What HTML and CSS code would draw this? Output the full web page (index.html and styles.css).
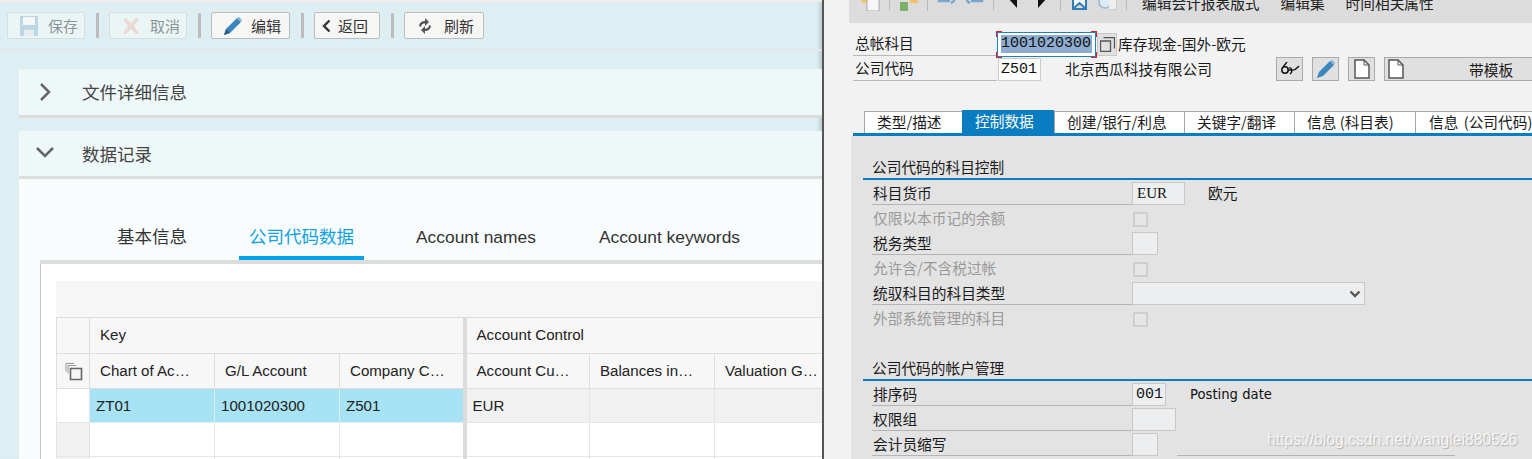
FILE: index.html
```html
<!DOCTYPE html>
<html lang="zh">
<head>
<meta charset="utf-8">
<title>SAP</title>
<link rel="stylesheet" href="styles.css">
</head>
<body>
<div class="screen">
  <main class="left">
    <div class="toolbar">
      <button class="btn off"><svg width="20" height="22" viewBox="0 0 20 22"><path d="M1 1h18v20H1z" fill="#bcd6e4"/><path d="M4 2h12v8H4z" fill="#f2f7f8"/><path d="M5 15h10v6H5z" fill="#e8eef0"/></svg><span>保存</span></button>
      <i class="sep"></i>
      <button class="btn off"><svg width="20" height="18" viewBox="0 0 20 18"><path d="M2 2l3-1 5 5 5-5 3 1-5 7 5 7-3 1-5-5-5 5-3-1 5-7z" fill="#ead9d3"/></svg><span>取消</span></button>
      <i class="sep"></i>
      <button class="btn edit"><svg width="20" height="20" viewBox="0 0 20 20"><path d="M1 19l2-6L14 2l4 4L7 17z" fill="#3b87bd"/><path d="M14 2l2-1 3 3-1 2z" fill="#7fb4d6"/><path d="M1 19l2-6 4 4z" fill="#2a5f8a"/></svg><span>编辑</span></button>
      <i class="sep"></i>
      <button class="btn back"><svg width="9" height="14" viewBox="0 0 9 14"><path d="M7.500 1.500L2 7l5.500 5.500" fill="none" stroke="#333" stroke-width="2.400"/></svg><span>返回</span></button>
      <i class="sep"></i>
      <button class="btn refresh"><svg width="16" height="18" viewBox="0 0 16 18"><path d="M2 9a6 6 0 0 1 6-5V1l4 4-4 4V6.500A3.500 3.500 0 0 0 4 10z" fill="#555"/><path d="M14 9a6 6 0 0 1-6 5v3l-4-4 4-4v2.500A3.500 3.500 0 0 0 12 8z" fill="#555"/></svg><span>刷新</span></button>
    </div>

    <section class="panel">
      <div class="panel-head">
        <svg class="chev" width="18" height="20" viewBox="0 0 18 20"><path d="M5 2l8 8-8 8" fill="none" stroke="#666" stroke-width="2.500"/></svg>
        <h2>文件详细信息</h2>
      </div>
    </section>

    <section class="panel open">
      <div class="panel-head">
        <svg class="chev" width="18" height="20" viewBox="0 0 18 20"><path d="M1 5l8 8 8-8" fill="none" stroke="#666" stroke-width="2.500"/></svg>
        <h2>数据记录</h2>
      </div>
      <div class="panel-body">
        <nav class="tabs">
          <a class="tab">基本信息</a>
          <a class="tab active">公司代码数据</a>
          <a class="tab">Account names</a>
          <a class="tab">Account keywords</a>
        </nav>
        <div class="tab-content">
          <div class="table-bar"></div>
          <table class="grid">
            <colgroup>
              <col class="c-sel"><col class="c-w"><col class="c-w"><col class="c-w3"><col class="c-w4"><col class="c-w"><col class="c-w">
            </colgroup>
            <tr class="group">
              <th></th>
              <th colspan="3" class="key-group">Key</th>
              <th colspan="3">Account Control</th>
            </tr>
            <tr class="head">
              <th class="copy"><svg width="18" height="18" viewBox="0 0 18 18"><path d="M1 .5h8M1 .5v8M3 2.500h8M3 2.500v8" fill="none" stroke="#999"/><path d="M5.500 5.500h11v11h-11z" fill="none" stroke="#666" stroke-width="1.600"/></svg></th>
              <th>Chart of Ac…</th>
              <th>G/L Account</th>
              <th class="key-end">Company C…</th>
              <th>Account Cu…</th>
              <th>Balances in…</th>
              <th>Valuation G…</th>
            </tr>
            <tr class="row first">
              <td class="sel"></td>
              <td class="hit">ZT01</td>
              <td class="hit">1001020300</td>
              <td class="hit key-end">Z501</td>
              <td class="pad4">EUR</td>
              <td></td>
              <td></td>
            </tr>
            <tr class="row">
              <td class="sel grey"></td><td></td><td></td><td class="key-end"></td><td></td><td></td><td></td>
            </tr>
            <tr class="row">
              <td class="sel grey"></td><td></td><td></td><td class="key-end"></td><td></td><td></td><td></td>
            </tr>
          </table>
        </div>
      </div>
    </section>
  </main>

  <aside class="right">
    <div class="sap-toolbar">
      <svg width="18" height="16" viewBox="0 0 18 16"><path d="M0 0h8v8H0z" fill="#f3c46e"/><path d="M5 2h12v14H5z" fill="#f7f7f7" stroke="#aaa"/></svg>
      <i class="sap-sep"></i>
      <svg width="19" height="16" viewBox="0 0 19 16"><path d="M1 7h8v9H1z" fill="#7fb069"/><path d="M11 0h8v8h-8z" fill="#f3c46e"/></svg>
      <i class="sap-sep"></i>
      <svg class="undo" width="19" height="12" viewBox="0 0 19 12"><path d="M2 0v8h11M14 0c5 2 5 8 0 10" fill="none" stroke="#7aa6cb" stroke-width="2.500"/></svg>
      <svg class="undo redo" width="18" height="12" viewBox="0 0 18 12"><path d="M16 0v8H5M4 0c-5 2-5 8 0 10" fill="none" stroke="#7aa6cb" stroke-width="2.500"/></svg>
      <i class="sap-sep"></i>
      <svg class="nav prev" width="9" height="10" viewBox="0 0 9 10"><path d="M0 0h9v10z" fill="#111"/></svg>
      <svg class="nav next" width="9" height="10" viewBox="0 0 9 10"><path d="M0 0h9L0 10z" fill="#111"/></svg>
      <i class="sap-sep"></i>
      <svg class="star" width="17" height="14" viewBox="0 0 17 14"><path d="M2 0v13h13V0M3 12l5.500-5 5.500 5" fill="#f3f6f8" stroke="#2f7fb5" stroke-width="2"/></svg>
      <svg class="find" width="20" height="14" viewBox="0 0 20 14"><circle cx="8" cy="6" r="6" fill="#dfe9f2" stroke="#93b9d6" stroke-width="1.500"/><path d="M12 1h8v13h-8" fill="#eee" stroke="#aaa"/></svg>
      <i class="sap-sep"></i>
      <span class="sap-action first">编辑会计报表版式</span>
      <span class="sap-action">编辑集</span>
      <span class="sap-action">时间相关属性</span>
    </div>

    <div class="head-form">
      <div class="h-row">
        <label class="h-label">总帐科目</label>
        <span class="focus-field"><b>1001020300</b></span>
        <span class="copy-btn"><svg width="15" height="15" viewBox="0 0 15 15"><path d="M3.500.5h11v11M.5 4h10v10.500H.5z" fill="none" stroke="#555" stroke-width="1.300"/></svg></span>
        <span class="h-desc">库存现金-国外-欧元</span>
      </div>
      <div class="h-row second">
        <label class="h-label">公司代码</label>
        <span class="code-field">Z501</span>
        <span class="h-desc company">北京西瓜科技有限公司</span>
        <span class="icon-btn"><svg width="20" height="16" viewBox="0 0 20 16"><circle cx="5" cy="9" r="3.200" fill="none" stroke="#111" stroke-width="1.500"/><path d="M9 7c3-1 4 4 1 6M3 6l4-5M8 9h4M12 9c3 1 5-2 7-4" fill="none" stroke="#111" stroke-width="1.300"/></svg></span>
        <span class="icon-btn"><svg width="20" height="20" viewBox="0 0 20 20"><path d="M1 19l2-6L14 2l4 4L7 17z" fill="#3b87bd"/><path d="M14 2l2-1 3 3-1 2z" fill="#7fb4d6"/></svg></span>
        <span class="icon-btn"><svg width="16" height="20" viewBox="0 0 16 20"><path d="M1 1h9l5 5v13H1z" fill="#fff" stroke="#555" stroke-width="1.500"/><path d="M10 1v5h5" fill="none" stroke="#555"/></svg></span>
        <span class="icon-btn wide"><svg width="16" height="20" viewBox="0 0 16 20"><path d="M1 1h9l5 5v13H1z" fill="#fff" stroke="#555" stroke-width="1.500"/><path d="M10 1v5h5" fill="none" stroke="#555"/></svg><span>带模板</span></span>
      </div>
    </div>

    <nav class="sap-tabs">
      <a class="s-tab t1">类型/描述</a>
      <a class="s-tab t2 on">控制数据</a>
      <a class="s-tab t3">创建/银行/利息</a>
      <a class="s-tab t4">关键字/翻译</a>
      <a class="s-tab t5">信息 (科目表)</a>
      <a class="s-tab t6">信息 (公司代码)</a>
    </nav>

    <div class="sap-body">
      <h3 class="s-title">公司代码的科目控制</h3>
      <div class="f-row line"><label>科目货币</label><span class="field w53 latin">EUR</span><span class="val">欧元</span></div>
      <div class="f-row dim"><label>仅限以本币记的余额</label><span class="check"></span></div>
      <div class="f-row line"><label>税务类型</label><span class="field w26"></span></div>
      <div class="f-row dim"><label>允许含/不含税过帐</label><span class="check"></span></div>
      <div class="f-row line"><label>统驭科目的科目类型</label><span class="field w233 select"><svg width="12" height="8" viewBox="0 0 12 8"><path d="M1.500 1.500L6 6l4.500-4.500" fill="none" stroke="#555" stroke-width="2.400"/></svg></span></div>
      <div class="f-row dim"><label>外部系统管理的科目</label><span class="check"></span></div>

      <h3 class="s-title second">公司代码的帐户管理</h3>
      <div class="f-row line"><label>排序码</label><span class="field w34 mono">001</span><span class="val latin-val">Posting date</span></div>
      <div class="f-row line"><label>权限组</label><span class="field w44"></span></div>
      <div class="f-row line"><label>会计员缩写</label><span class="field w26"></span><span class="rule"></span></div>
    </div>
    <div class="watermark">https://blog.csdn.net/wanglei880526</div>
  </aside>
</div>
</body>
</html>
```

FILE: styles.css
```css
* { box-sizing: border-box; }
html, body { margin: 0; height: 100%; overflow: hidden; }
body { font-family: "Liberation Sans", "Noto Sans CJK SC", sans-serif; background: #f2f2f2; color: #333; }
.screen { display: flex; width: 1532px; height: 459px; overflow: hidden; }

/* left window */
.left { width: 822px; flex: none; height: 459px; overflow: hidden; background: #ddeff3; box-shadow: inset -5px 0 4px -3px rgba(0,0,0,.18); }
.toolbar { height: 51px; display: flex; align-items: center; padding: 0 0 0 7px; border-top: 2px solid #efeeec; border-bottom: 2px solid #e4e8e8; }
.btn { height: 27px; width: 78px; margin: 0; padding: 0 0 0 11px; display: flex; align-items: center; gap: 9px; background: #f6f6f5; border: 1px solid #bdbdbd; border-radius: 2px; font: 15px "Noto Sans CJK SC", sans-serif; color: #333; }
.btn svg { flex: none; }
.btn.edit { width: 79px; gap: 8px; }
.btn.back { width: 66px; padding-left: 7px; gap: 7px; }
.btn.refresh { width: 80px; padding-left: 12px; gap: 11px; }
.btn.off { background: #ecf5f6; border-color: #d5dfe1; color: #8b9597; }
.sep { width: 3px; height: 25px; margin: 0 10px 0 11px; background: #bdbdbd; }
.panel { margin: 18px 0 0 19px; }
.panel.open { margin-top: 13px; }
.panel-head { height: 49px; display: flex; align-items: center; background: #eff8f9; border-bottom: 3px solid #dcdcdc; padding: 0 0 1px 17px; }
.panel.open .panel-head { height: 48px; }
.chev { flex: none; }
.panel-head h2 { margin: 0 0 0 28px; font: 400 17.500px "Noto Sans CJK SC", sans-serif; color: #444; }
.panel.open h2 { margin-top: 1px; }
.panel-body { background: #f8fcfd; height: 280px; padding-top: 41px; }
.tabs { display: flex; height: 44px; margin-left: 21px; border-bottom: 4px solid #dcdcdc; padding-left: 77px; }
.tab { height: 40px; font-size: 17.500px; line-height: 35px; color: #333; white-space: nowrap; }
.tab:nth-child(1) { margin-right: 52px; }
.tab:nth-child(2) { padding: 0 10px; color: #0fa0e0; border-bottom: 4px solid #00a3e8; margin-right: 52px; }
.tab:nth-child(3) { margin-right: 63px; font-size: 17.400px; line-height: 34px; }
.tab:nth-child(4) { font-size: 17.400px; line-height: 34px; }
.tab-content { margin-left: 21px; height: 200px; background: #fff; border-left: 1px solid #c8c8c8; padding: 17px 0 0 15px; }
.table-bar { height: 36px; background: #f6f6f6; }
.grid { border-collapse: collapse; table-layout: fixed; width: 766px; font-size: 15.100px; color: #222; }
.c-sel { width: 33px; } .c-w { width: 125px; } .c-w3 { width: 125px; } .c-w4 { width: 125px; }
.grid th { font-weight: 400; text-align: left; background: #f7f7f7; border: 1px solid #dedede; padding: 0 0 0 10px; white-space: nowrap; overflow: hidden; }
.group th { height: 36px; padding-bottom: 2px; }
.group th.key-group { border-right: 4px solid #dcdcdc; }
.head th { height: 35px; padding-bottom: 2px; }
.head th.copy { padding: 4px 0 0 8px; }
.key-end { border-right: 4px solid #dcdcdc !important; }
.row td { height: 34px; background: #fff; border: 1px solid #e6e6e6; padding: 0 0 0 6px; }
.row.first td { background: #f1f1f1; }
.row.first td.hit { background: #a8e3f5; border-color: #dceff5; }
.row.first td.sel { background: #fff; }
.row td.grey { background: #f1f1f1; }

/* right window */
.right { position: relative; flex: 1; min-width: 0; height: 459px; overflow: hidden; background: #f2f2f2; border-left: 2px solid #555; color: #1a1a1a; font: 14.700px "Noto Sans CJK SC", sans-serif; }
.sap-toolbar { height: 23px; margin-left: 25px; background: #dcdcdc; display: flex; align-items: flex-end; padding: 0 0 12px 13px; overflow: hidden; white-space: nowrap; }
.sap-toolbar svg { flex: none; }
.sap-toolbar .undo { margin-bottom: 6px; }
.sap-toolbar .redo { margin-left: 10px; }
.sap-toolbar .prev { margin: 0 0 3px 5px; }
.sap-toolbar .next { margin: 0 4px 3px 21px; }
.sap-toolbar .star { margin: 0 0 1px 1px; }
.sap-toolbar .find { margin: 0 0 1px 9px; }
.sap-sep { width: 1px; height: 14px; flex: none; background: #bbb; margin: 0 9px; }
.sap-action { font-size: 14.700px; line-height: 20px; margin: 0 0 -2px 21px; flex: none; color: #222; }
.sap-action.first { margin-left: 6px; }
.head-form { height: 87px; padding: 9px 0 0 29px; }
.h-row { display: flex; height: 24px; align-items: center; }
.h-row.second { margin-top: 1px; }
.h-label { width: 144px; height: 24px; flex: none; line-height: 21px; padding-left: 2px; border-bottom: 1px solid #b8b8b8; }
.focus-field { position: relative; flex: none; width: 99px; height: 25px; border: 1px solid #1f7fbf; padding: 2px 0 0 3px; background: #fff; }
.focus-field::before { content: ""; position: absolute; inset: -2px; background:
  linear-gradient(#d22,#d22) 0 0/6px 1px no-repeat, linear-gradient(#d22,#d22) 0 0/1px 6px no-repeat,
  linear-gradient(#d22,#d22) 100% 0/6px 1px no-repeat, linear-gradient(#d22,#d22) 100% 0/1px 6px no-repeat,
  linear-gradient(#d22,#d22) 0 100%/6px 1px no-repeat, linear-gradient(#d22,#d22) 0 100%/1px 6px no-repeat,
  linear-gradient(#d22,#d22) 100% 100%/6px 1px no-repeat, linear-gradient(#d22,#d22) 100% 100%/1px 6px no-repeat; }
.focus-field b { display: block; font: 400 15px "Liberation Mono", monospace; line-height: 18px; background: #8eacd0; color: #111; width: 91px; }
.copy-btn { flex: none; width: 20px; height: 23px; margin-left: 1px; background: #e0e0e0; border: 1px solid #c8c8c8; display: flex; align-items: center; justify-content: center; }
.h-desc { margin-left: 1px; margin-bottom: 2px; white-space: nowrap; }
.h-desc.company { margin-left: 24px; width: 211px; flex: none; }
.code-field { flex: none; width: 43px; height: 23px; margin-left: 1px; background: #fff; border: 1px solid #ccc; font: 15px/21px "Liberation Mono", monospace; padding-left: 2px; color: #111; }
.icon-btn { flex: none; width: 27px; height: 24px; margin-right: 9px; background: #e0e0e0; border: 1px solid #aaa; display: flex; align-items: center; justify-content: center; }
.icon-btn.wide { width: 160px; margin-right: -40px; justify-content: flex-start; padding-left: 3px; }
.icon-btn.wide span { margin-left: 65px; }
.sap-tabs { display: flex; height: 26px; margin-left: 29px; border-bottom: 3px solid #0a7cc1; padding-left: 11px; padding-top: 1px; white-space: nowrap; }
.s-tab { height: 22px; background: #fff; border-left: 1px solid #a8a8a8; border-top: 1px solid #a8a8a8; padding-left: 12px; line-height: 20px; overflow: hidden; flex: none; }
.t1 { width: 98px; } .t2 { width: 92px; } .t3 { width: 130px; } .t4 { width: 110px; } .t5 { width: 121px; } .t6 { width: 130px; padding-left: 13px; word-spacing: 2px; }
.s-tab.on { background: #0a7cc1; color: #fff; height: 23px; margin-top: -1px; border: 0; line-height: 22px; padding-left: 13px; }
.sap-body { margin-left: 27px; height: 330px; background: #e3e3e3; padding: 20px 0 0 12px; }
.s-title { margin: 0; height: 24px; font: 400 14.700px/22px "Noto Sans CJK SC", sans-serif; padding-left: 9px; border-bottom: 2px solid #0a7cc1; color: #1a1a1a; }
.s-title.second { margin-top: 27px; }
.f-row { display: flex; height: 25px; margin-left: 9px; align-items: flex-end; white-space: nowrap; }
.f-row label { width: 260px; flex: none; height: 24px; line-height: 23px; padding-left: 1px; }
.f-row.line label { border-bottom: 1px solid #b5b5b5; }
.f-row.dim label { color: #9a9a9a; }
.field { height: 23px; flex: none; background: #eceef0; border: 1px solid #c8c8c8; }
.w53 { width: 53px; } .w26 { width: 26px; } .w34 { width: 34px; } .w44 { width: 44px; } .w233 { width: 233px; }
.latin { font: 15px/20px "Liberation Serif", serif; padding-left: 4px; color: #111; }
.mono { font: 15px/21px "Liberation Mono", monospace; padding-left: 3px; color: #111; }
.select { display: flex; align-items: center; justify-content: flex-end; padding-right: 3px; }
.val { margin: 0 0 2px 23px; line-height: 20px; }
.latin-val { font: 13.200px/20px "DejaVu Sans", sans-serif; color: #111; margin: 0 0 1px 24px; }
.check { width: 15px; height: 15px; margin: 0 0 3px 1px; flex: none; background: #e6e6e6; border: 2px solid #cfcfcf; }
.rule { width: 278px; height: 1px; margin-left: 19px; background: #b5b5b5; }
.watermark { position: absolute; left: 443px; top: 431px; font: 15.700px "Liberation Sans", sans-serif; color: rgba(250,250,250,.9); text-shadow: 1px 1px 1px rgba(140,140,140,.55); white-space: nowrap; }
```
